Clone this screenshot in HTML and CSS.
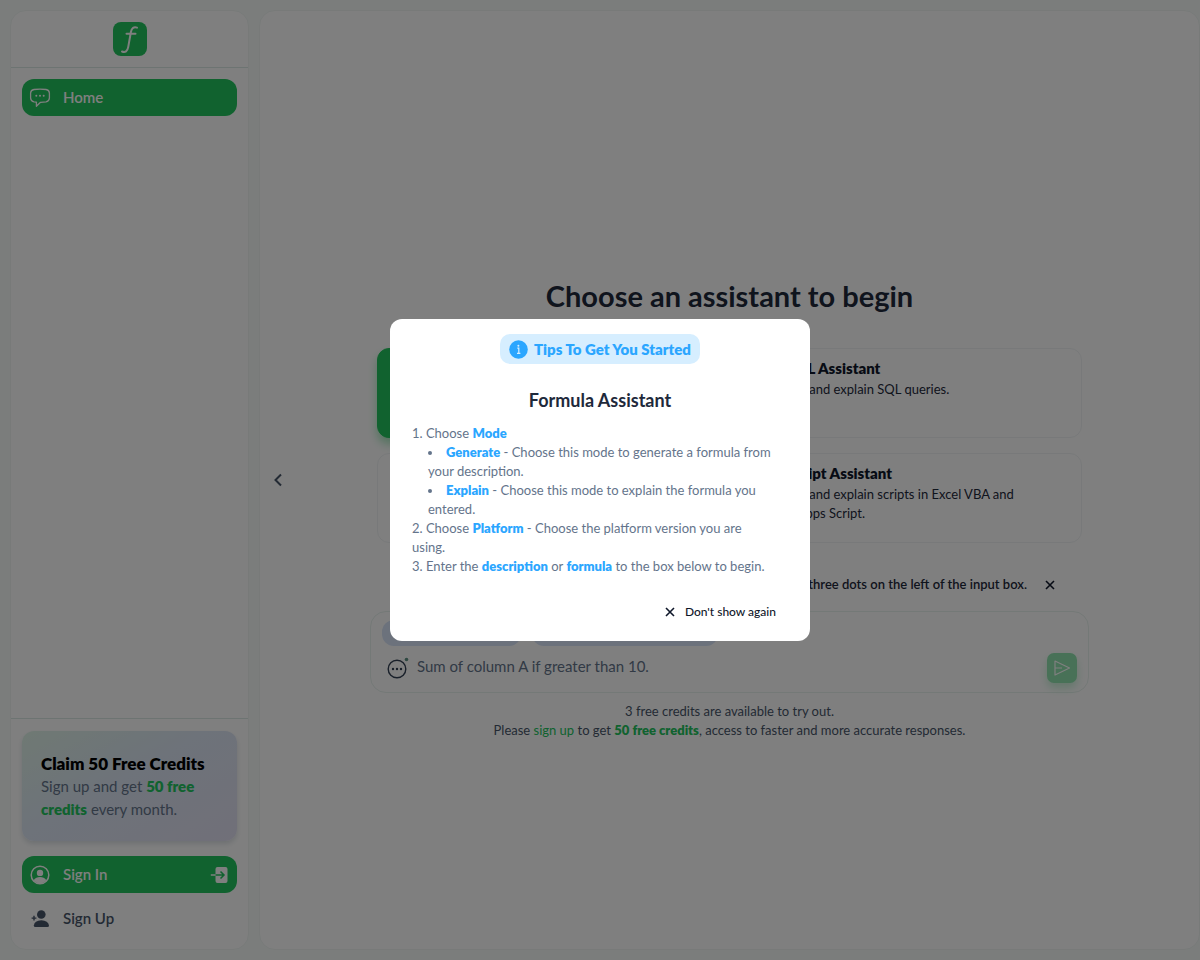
FILE: index.html
```html
<!DOCTYPE html>
<html lang="en">
<head>
  <meta charset="UTF-8" />
  <meta name="viewport" content="width=device-width, initial-scale=1.0" />
  <title>Formula Assistant</title>
  <link rel="stylesheet" href="styles.css">
</head>
<body>
  <div class="app">
    <aside class="sidebar">
      <div class="sidebar-header">
        <a class="logo" href="#" aria-label="Home page">
          <svg width="34" height="34" viewBox="0 0 34 34" fill="none" stroke="#fff" stroke-width="2" stroke-linecap="round">
            <path d="M24 5.600c-3-1.200-5.400.3-6.100 4.400l-2.700 15.200c-.7 4-3 5.800-6.200 4.300M13.500 11.700h9" />
          </svg>
        </a>
      </div>
      <nav class="sidebar-nav">
        <a class="nav-item active" href="#">
          <svg width="22" height="22" viewBox="0 0 22 22" fill="none" stroke="currentColor" stroke-width="1.300" stroke-linejoin="round">
            <path d="M5 2.500Q11 1.600 17 2.500Q20.200 3 20.400 6V11Q20.200 14.400 17 14.900L11.500 15.300L7.400 19.300V15.100L5 14.900Q1.800 14.400 1.600 11V6Q1.800 3 5 2.500Z" />
            <g fill="currentColor" stroke="none"><circle cx="7.300" cy="8.800" r="1" /><circle cx="11" cy="8.800" r="1" /><circle cx="14.700" cy="8.800" r="1" /></g>
          </svg>
          <span>Home</span>
        </a>
      </nav>
      <div class="sidebar-footer">
        <div class="claim">
          <h2>Claim 50 Free Credits</h2>
          <p>Sign up and get <strong>50 free credits</strong> every month.</p>
        </div>
        <a class="nav-item active" href="#">
          <svg width="22" height="22" viewBox="0 0 22 22">
            <circle cx="11" cy="11" r="8.800" fill="none" stroke="currentColor" stroke-width="1.500" />
            <circle cx="11" cy="8.900" r="3.200" fill="currentColor" />
            <path d="M4.600 16.200Q7 13 11 13T17.400 16.200Q15 19.300 11 19.300T4.600 16.200Z" fill="currentColor" />
          </svg>
          <span>Sign In</span>
          <svg class="nav-end" width="18" height="18" viewBox="0 0 18 18">
            <path d="M7 1h8.500Q17.500 1 17.500 3v12Q17.500 17 15.500 17H7.500Q5.500 17 5.500 15V3Q5.500 1 7.500 1Z" fill="currentColor" />
            <path d="M5.500 9H14M10.500 5.500L14 9l-3.500 3.500" fill="none" stroke="#22c55e" stroke-width="1.500" />
            <path d="M.8 9h4.700" stroke="currentColor" stroke-width="1.500" />
          </svg>
        </a>
        <a class="nav-item" href="#">
          <svg width="22" height="22" viewBox="0 0 22 22" fill="currentColor">
            <circle cx="12.300" cy="6.500" r="4.300" />
            <path d="M4.800 17.500Q5.500 12.500 12.300 12.200Q19.200 12.500 20 17.500Q20 19 18.500 19H6.300Q4.800 19 4.800 17.500Z" />
            <path d="M5 7.700v4.800M2.600 10.100h4.800" stroke="currentColor" stroke-width="1.400" />
          </svg>
          <span>Sign Up</span>
        </a>
      </div>
    </aside>

    <main class="main">
      <button class="collapse" type="button" aria-label="Collapse sidebar">
        <svg width="16" height="16" viewBox="0 0 16 16" fill="none" stroke="currentColor" stroke-width="2"><path d="M11 2.500L5.500 8l5.500 5.500" /></svg>
      </button>
      <div class="content">
        <h1>Choose an assistant to begin</h1>
        <div class="cards">
          <button class="card selected" type="button">
            <span class="card-title">Formula Assistant</span>
            <span class="card-text">Generate and explain formulas.</span>
          </button>
          <button class="card" type="button">
            <span class="card-title"><svg width="20" height="16" viewBox="0 0 20 16" fill="none" stroke="currentColor"><rect x="1" y="1" width="16" height="14" rx="2" /><path d="M1 6h16" /></svg>SQL Assistant</span>
            <span class="card-text">Generate and explain SQL queries.</span>
          </button>
          <button class="card" type="button">
            <span class="card-title">Regex Assistant</span>
            <span class="card-text">Generate and explain regex.</span>
          </button>
          <button class="card" type="button">
            <span class="card-title"><svg width="20" height="16" viewBox="0 0 20 16" fill="none" stroke="currentColor"><path d="M6 3L1 8l5 5M12 3l5 5-5 5" /></svg>Script Assistant</span>
            <span class="card-text">Generate and explain scripts in Excel VBA and Google Apps Script.</span>
          </button>
        </div>
        <div class="hint">
          <p>Change the settings from the three dots on the left of the input box.</p>
          <button type="button" aria-label="Close hint">
            <svg width="10" height="10" viewBox="0 0 10 10" stroke="currentColor" stroke-width="1.600"><path d="M1 1l8 8M9 1L1 9" /></svg>
          </button>
        </div>
        <form class="prompt">
          <div class="chips">
            <button class="chip chip-mode" type="button" aria-label="Mode"></button>
            <button class="chip chip-platform" type="button" aria-label="Platform"></button>
          </div>
          <div class="prompt-row">
            <button class="options" type="button" aria-label="Options">
              <svg width="22" height="22" viewBox="0 0 22 22">
                <circle cx="10" cy="12" r="8.800" fill="none" stroke="currentColor" stroke-width="1.400" />
                <g fill="currentColor"><circle cx="6" cy="12" r="1.200" /><circle cx="10" cy="12" r="1.200" /><circle cx="14" cy="12" r="1.200" /></g>
                <circle cx="19.500" cy="2.500" r="1.800" fill="#5f9284" />
              </svg>
            </button>
            <input type="text" aria-label="Prompt" placeholder="Sum of column A if greater than 10.">
            <button class="send" type="submit" aria-label="Send">
              <svg width="18" height="18" viewBox="0 0 18 18" fill="none" stroke="currentColor" stroke-width="1.200" stroke-linejoin="round"><path d="M2 2l14.500 7L2 16zM2 9H9" /></svg>
            </button>
          </div>
        </form>
        <div class="credits">
          <p>3 free credits are available to try out.</p>
          <p>Please <a href="#">sign up</a> to get <strong>50 free credits</strong>, access to faster and more accurate responses.</p>
        </div>
      </div>
    </main>
  </div>

  <div class="overlay">
    <div class="modal" role="dialog" aria-modal="true" aria-labelledby="tips-title">
      <div class="badge">
        <svg width="19" height="19" viewBox="0 0 19 19">
          <circle cx="9.500" cy="9.500" r="9.300" fill="#2ba6ff" />
          <path d="M8.300 8.200h1.500v5M8 13.300h3.400" fill="none" stroke="#d6eeff" stroke-width="1.200" />
          <circle cx="9.400" cy="5.700" r="1" fill="#d6eeff" />
        </svg>
        <span>Tips To Get You Started</span>
      </div>
      <h2 id="tips-title">Formula Assistant</h2>
      <div class="tips">
        <p>1. Choose <strong>Mode</strong></p>
        <ul>
          <li><strong>Generate</strong> - Choose this mode to generate a formula from your description.</li>
          <li><strong>Explain</strong> - Choose this mode to explain the formula you entered.</li>
        </ul>
        <p>2. Choose <strong>Platform</strong> - Choose the platform version you are using.</p>
        <p>3. Enter the <strong>description</strong> or <strong>formula</strong> to the box below to begin.</p>
      </div>
      <button class="dismiss" type="button">
        <svg width="10" height="10" viewBox="0 0 10 10" stroke="currentColor" stroke-width="1.600"><path d="M1 1l8 8M9 1L1 9" /></svg>
        <span>Don't show again</span>
      </button>
    </div>
  </div>
</body>
</html>
```
FILE: styles.css
```css
* {
  box-sizing: border-box;
}
body {
  margin: 0;
  background: #f6fbf9;
  font-family: Lato, sans-serif;
  font-size: 13px;
  line-height: 19px;
  color: #1e293b;
}
h1, h2, p, ul {
  margin: 0;
}
strong {
  font-weight: 800;
}
button {
  border: 0;
  padding: 0;
  background: none;
  font: inherit;
  color: inherit;
}
a {
  text-decoration: none;
}
svg {
  flex: none;
}
.app {
  display: flex;
  gap: 10px;
  min-height: 100vh;
  padding: 10px 0 10px 10px;
}

/* sidebar */
.sidebar {
  width: 239px;
  flex: none;
  display: flex;
  flex-direction: column;
  background: #fff;
  border: 1px solid #f0f5f3;
  border-radius: 16px;
}
.sidebar-header {
  display: flex;
  justify-content: center;
  padding: 11px;
  border-bottom: 1px solid #dbe8e4;
}
.logo {
  display: flex;
  background: #22c55e;
  border-radius: 8px;
}
.sidebar-nav {
  flex: 1;
  padding: 11px;
}
.nav-item {
  display: flex;
  align-items: center;
  gap: 12px;
  height: 37px;
  padding: 0 9px 0 7px;
  border-radius: 12px;
  font-size: 15px;
  font-weight: 600;
  color: #475569;
}
.nav-item.active {
  background: #22c55e;
  color: #fff;
}
.nav-end {
  margin-left: auto;
}
.sidebar-footer {
  display: flex;
  flex-direction: column;
  padding: 12px 11px;
  border-top: 1px solid #dbe8e4;
}
.sidebar-footer .nav-item + .nav-item {
  margin-top: 7px;
}
.claim {
  height: 110px;
  margin-bottom: 15px;
  padding: 21px 19px;
  border-radius: 12px;
  background: linear-gradient(150deg, #dff3e8 0%, #dce6f4 45%, #e2e0f2 100%);
  box-shadow: 0 3px 5px rgba(30, 60, 80, 0.15);
}
.claim h2 {
  font-size: 17px;
  line-height: 23px;
  font-weight: 800;
  color: #000;
}
.claim p {
  font-size: 15px;
  line-height: 23px;
  color: #64748b;
}
.claim strong {
  color: #22c55e;
}

/* main panel */
.main {
  flex: 1;
  display: flex;
  align-items: center;
  padding-right: 26px;
  background: #fff;
  border: 1px solid #f0f5f3;
  border-radius: 16px;
}
.collapse {
  display: flex;
  width: 16px;
  margin-left: 10px;
  color: #475569;
}
.content {
  flex: 1;
  display: flex;
  flex-direction: column;
  max-width: 719px;
  margin: 56px auto 0;
}
.content h1 {
  margin-bottom: 32px;
  font-size: 29px;
  line-height: 40px;
  font-weight: 700;
  text-align: center;
}
.cards {
  display: grid;
  grid-template-columns: 1fr 1fr;
  gap: 15px;
  padding: 0 7px;
}
.card {
  display: flex;
  flex-direction: column;
  align-items: flex-start;
  height: 90px;
  padding: 10px 40px 10px 15px;
  border: 1px solid #f0f3f5;
  border-radius: 12px;
  text-align: left;
}
.card.selected {
  background: #22c55e;
  border-color: #22c55e;
  color: #fff;
  box-shadow: 0 6px 10px rgba(34, 197, 94, 0.4);
}
.card-title {
  display: flex;
  align-items: center;
  gap: 14px;
  margin-bottom: 2px;
  font-size: 15px;
  font-weight: 800;
  color: #0f172a;
}
.card-text {
  color: #1e293b;
}
.hint {
  display: flex;
  justify-content: flex-end;
  align-items: center;
  gap: 18px;
  padding: 32px 34px 17px 0;
  font-weight: 600;
}
.hint button {
  display: flex;
  color: #0f172a;
}
.prompt {
  padding: 8px 11px 9px;
  border: 1px solid #e8f2ee;
  border-radius: 16px;
}
.chips {
  display: flex;
  gap: 11px;
}
.chip {
  height: 26px;
  border-radius: 12px;
  background: #d8e4f8;
}
.chip-mode {
  width: 139px;
}
.chip-platform {
  width: 186px;
}
.prompt-row {
  display: flex;
  align-items: center;
  gap: 8px;
  margin-top: 7px;
  padding-left: 5px;
}
.options {
  display: flex;
  color: #334155;
}
.prompt input {
  flex: 1;
  border: 0;
  padding: 0 0 3px;
  background: none;
  font: inherit;
  font-size: 15px;
}
.prompt input::placeholder {
  color: #64748b;
  opacity: 1;
}
.send {
  display: grid;
  place-items: center;
  width: 30px;
  height: 30px;
  border-radius: 7px;
  background: #90e2ae;
  color: #fff;
  box-shadow: 0 5px 9px rgba(34, 197, 94, 0.25);
}
.credits {
  margin-top: 9px;
  text-align: center;
  color: #475569;
}
.credits a,
.credits strong {
  color: #22c55e;
}

/* tips dialog */
.overlay {
  position: fixed;
  inset: 0;
  display: grid;
  place-items: center;
  background: rgba(0, 0, 0, 0.5);
}
.modal {
  display: flex;
  flex-direction: column;
  align-items: center;
  width: 420px;
  padding: 15px 22px 20px;
  border-radius: 12px;
  background: #fff;
}
.badge {
  display: flex;
  align-items: center;
  gap: 6px;
  height: 30px;
  padding: 0 9px;
  border-radius: 10px;
  background: #d6eeff;
  font-size: 15px;
  font-weight: 800;
  color: #2ba6ff;
}
.modal h2 {
  margin: 24px 0 12px;
  font-size: 18px;
  line-height: 24px;
  font-weight: 700;
}
.tips {
  width: 100%;
  padding-right: 13px;
  color: #64748b;
}
.tips strong {
  color: #2ba6ff;
}
.tips ul {
  padding-left: 16px;
  list-style-position: inside;
}
.dismiss {
  display: flex;
  align-items: center;
  align-self: flex-end;
  gap: 10px;
  margin: 26px 12px 0 0;
  font-size: 12px;
  font-weight: 500;
  color: #0f172a;
}
```
